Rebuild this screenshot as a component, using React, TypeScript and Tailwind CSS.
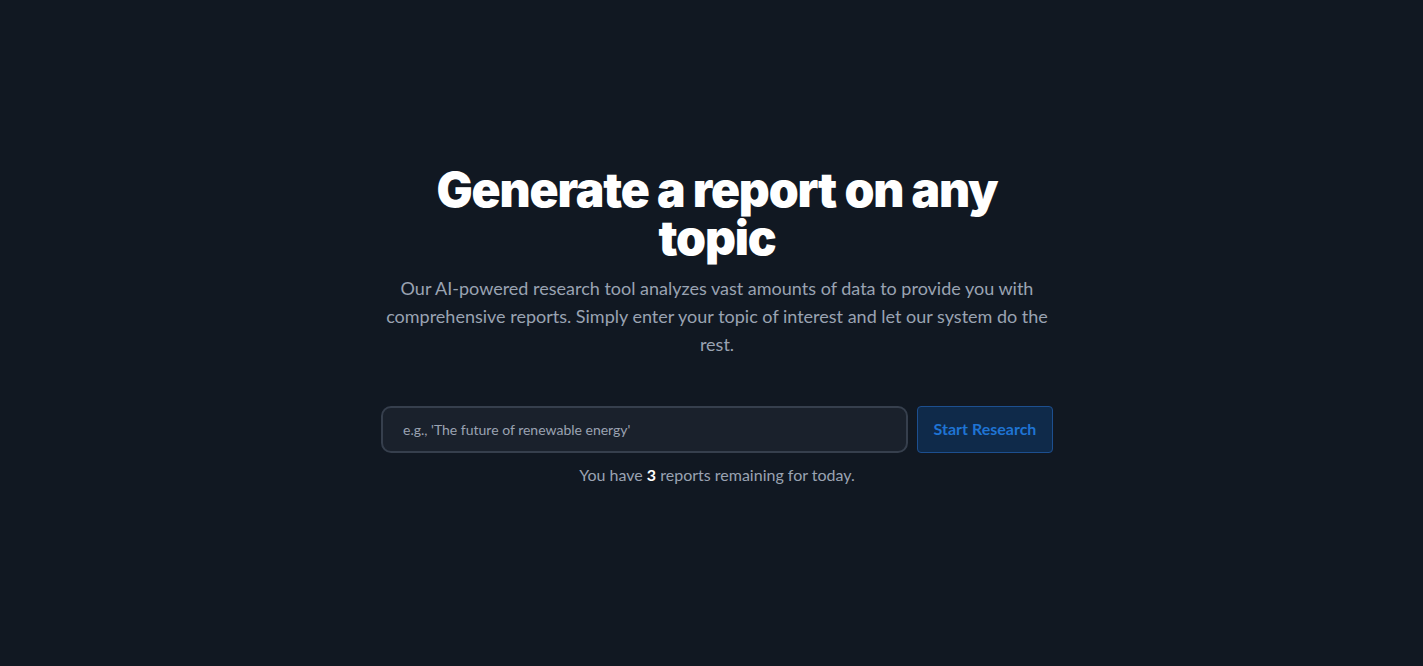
import { useState } from "react";

const BODY_FONT = { fontFamily: 'Lato, "Open Sans", sans-serif' };
const HEADING_FONT = { fontFamily: 'Inter, "Noto Sans", sans-serif' };

export default function App() {
  const [topic, setTopic] = useState("");
  const remaining = 3;

  return (
    <div
      className="flex min-h-screen w-full items-center justify-center bg-[#111822] pl-[27px] pr-[16px]"
      style={BODY_FONT}
    >
      <div className="flex w-full max-w-[672px] flex-col items-center pt-[4px] pb-[20px] text-center">
        <h1
          className="text-[48px] font-black leading-[48px] tracking-[-0.025em] text-white"
          style={HEADING_FONT}
        >
          Generate a report on any topic
        </h1>
        <p className="mt-[12px] text-[18px] leading-[28px] text-[#9aa3b2]">
          Our AI-powered research tool analyzes vast amounts of data to provide
          you with comprehensive reports. Simply enter your topic of interest
          and let our system do the rest.
        </p>

        <form
          className="mt-[48px] flex w-full gap-[9px]"
          onSubmit={(e) => e.preventDefault()}
        >
          <input
            value={topic}
            onChange={(e) => setTopic(e.target.value)}
            placeholder="e.g., 'The future of renewable energy'"
            className="h-[47px] flex-1 rounded-[10px] border-2 border-[#363f4d] bg-[#1a212c] px-[20px] text-[14px] text-white outline-none placeholder:text-[#9aa3b2]"
          />
          <button
            type="submit"
            className="h-[47px] w-[136px] rounded-[4px] border border-[#1d4f8f] bg-[#0f2a4a] text-[16px] font-bold text-[#1f74d4]"
          >
            Start Research
          </button>
        </form>

        <p className="mt-[12px] text-[16px] leading-[20px] text-[#9aa3b2]">
          You have <span className="font-bold text-white">{remaining}</span>{" "}
          reports remaining for today.
        </p>
      </div>
    </div>
  );
}
